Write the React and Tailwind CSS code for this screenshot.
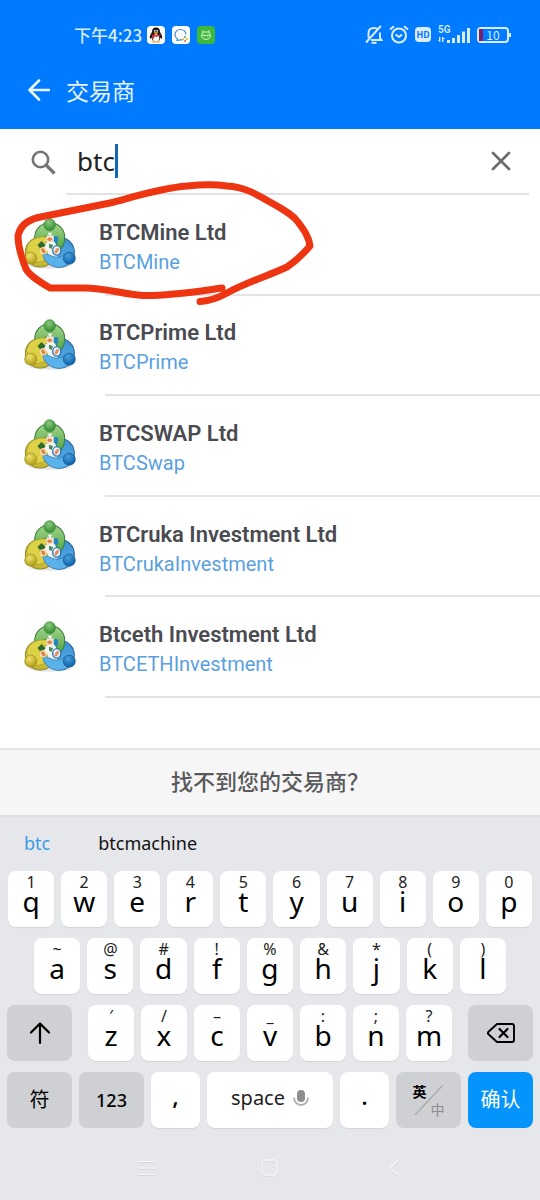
import React from "react";

const brokers = [
  { name: "BTCMine Ltd", server: "BTCMine" },
  { name: "BTCPrime Ltd", server: "BTCPrime" },
  { name: "BTCSWAP Ltd", server: "BTCSwap" },
  { name: "BTCruka Investment Ltd", server: "BTCrukaInvestment" },
  { name: "Btceth Investment Ltd", server: "BTCETHInvestment" },
];

const rowOne = [["q", "1"], ["w", "2"], ["e", "3"], ["r", "4"], ["t", "5"], ["y", "6"], ["u", "7"], ["i", "8"], ["o", "9"], ["p", "0"]];
const rowTwo = [["a", "~"], ["s", "@"], ["d", "#"], ["f", "!"], ["g", "%"], ["h", "&"], ["j", "*"], ["k", "("], ["l", ")"]];
const rowThree = [["z", "′"], ["x", "/"], ["c", "–"], ["v", "_"], ["b", ":"], ["n", ";"], ["m", "?"]];

function LogoDefs() {
  return (
    <svg width="0" height="0" className="absolute" aria-hidden="true">
      <defs>
        <linearGradient id="green" x1="0" y1="0" x2="0" y2="1">
          <stop offset="0" stopColor="#a5d48c" />
          <stop offset="1" stopColor="#4ea544" />
        </linearGradient>
        <linearGradient id="yellow" x1="0" y1="0" x2="0" y2="1">
          <stop offset="0" stopColor="#f0e65c" />
          <stop offset="1" stopColor="#c2b32c" />
        </linearGradient>
        <linearGradient id="blue" x1="0" y1="0" x2="0" y2="1">
          <stop offset="0" stopColor="#3b8ed0" />
          <stop offset="1" stopColor="#5cb6ea" />
        </linearGradient>
        <radialGradient id="greenHead" cx="0.45" cy="0.3" r="0.7">
          <stop offset="0" stopColor="#8cc97c" />
          <stop offset="1" stopColor="#2f8a31" />
        </radialGradient>
        <radialGradient id="yellowHead" cx="0.4" cy="0.3" r="0.7">
          <stop offset="0" stopColor="#efe36a" />
          <stop offset="1" stopColor="#b09a18" />
        </radialGradient>
        <radialGradient id="blueHead" cx="0.4" cy="0.3" r="0.7">
          <stop offset="0" stopColor="#4a9fdc" />
          <stop offset="1" stopColor="#0c5fa8" />
        </radialGradient>
      </defs>
    </svg>
  );
}

function BrokerLogo() {
  return (
    <svg viewBox="0 0 154 154" className="size-[52px] shrink-0" aria-hidden="true">
      <ellipse cx="77" cy="141" rx="62" ry="9" fill="#000" opacity="0.1" />
      <circle cx="48" cy="101" r="44" fill="url(#yellow)" stroke="#8f8726" strokeWidth="3" />
      <circle cx="105" cy="101" r="44" fill="url(#blue)" stroke="#235f96" strokeWidth="3" />
      <path d="M32 62C30 34 50 14 76 14C104 14 124 36 120 64C119 78 114 88 104 96C98 90 96 82 97 72C98 62 94 56 86 54H66C54 58 46 62 32 62Z" fill="url(#green)" stroke="#3c7d39" strokeWidth="3" />
      <path d="M68 52H88L92 74L104 92L98 116H62L50 96L58 76Z" fill="#f3f5f0" />
      <path d="M8 96C8 70 32 54 64 56L76 62L66 74C54 74 47 82 48 92C58 88 66 92 70 104L58 128L28 134Z" fill="#ddd146" stroke="#a1962b" strokeWidth="2" />
      <path d="M40 80L52 68L64 80L56 90L46 88Z" fill="#2e6a2b" />
      <path d="M56 108C66 102 76 112 90 115C102 118 112 114 118 108L140 128C124 150 90 152 70 134C62 126 57 118 56 108Z" fill="#5ab2ea" stroke="#2a6da5" strokeWidth="2" />
      <path d="M70 44H84L77 54Z" fill="#fff" />
      <rect x="66" y="54" width="20" height="17" rx="4" fill="#f6dfc4" />
      <ellipse cx="76" cy="63" rx="7" ry="5" fill="#e0814c" />
      <rect x="88" y="54" width="13" height="18" rx="3" fill="#2586be" />
      <ellipse cx="57" cy="97" rx="10" ry="11" fill="#f6dcae" />
      <ellipse cx="57" cy="97" rx="5" ry="8" fill="#dd8246" transform="rotate(-35 57 97)" />
      <ellipse cx="97" cy="96" rx="12" ry="14" fill="#eef2f4" stroke="#2b74b4" strokeWidth="4" />
      <ellipse cx="97" cy="97" rx="5" ry="9" fill="#e0905c" transform="rotate(30 97 97)" />
      <path d="M74 76L86 80L82 92L74 88Z" fill="#4a8a64" />
      <ellipse cx="76" cy="20" rx="17" ry="18" fill="url(#greenHead)" stroke="#3c8a3a" strokeWidth="2" />
      <circle cx="20" cy="119" r="18" fill="url(#yellowHead)" stroke="#a0911f" strokeWidth="2" />
      <circle cx="134" cy="119" r="18" fill="url(#blueHead)" stroke="#17598f" strokeWidth="2" />
    </svg>
  );
}

function StatusBar() {
  return (
    <div className="flex h-[52px] items-end pb-2 pl-[74px] pr-[29px]">
      <div className="flex items-center gap-[7px]">
        <span className="-mr-[2px] text-[17px] leading-[18px] font-medium text-[#d8ecff]">下午4:23</span>
        <svg viewBox="0 0 18 18" className="size-[18px]" aria-hidden="true">
          <rect width="18" height="18" rx="4" fill="#fff" />
          <path d="M9 1.600c-3 0-4 2-4 4.500C3.500 8.500 2.300 10.500 3 12.600c.4.6 1.100-.4 1.600-1 .3 2.500 2 4.400 4.400 4.400s4.100-1.900 4.400-4.400c.5.6 1.200 1.600 1.600 1 .7-2.100-.5-4.100-2-6.500C13 3.600 12 1.600 9 1.600z" fill="#151515" />
          <ellipse cx="9" cy="12" rx="3.300" ry="3.700" fill="#fff" />
          <path d="M4.600 8.200c3 1.500 5.800 1.500 8.800 0l.2 1.400c-2 1-4.500 1.500-6.600 1.100l-.3 2.300-1.500-.2.100-2.700z" fill="#e02a2a" />
          <ellipse cx="9" cy="6.900" rx="2.400" ry=".8" fill="#f5a623" />
          <circle cx="7.800" cy="4.800" r=".9" fill="#fff" />
          <circle cx="10.200" cy="4.800" r=".9" fill="#fff" />
          <path d="M5 16h3.500M9.500 16H13" stroke="#f0a020" strokeWidth="1.200" />
        </svg>
        <svg viewBox="0 0 18 18" className="size-[18px]" aria-hidden="true">
          <rect width="18" height="18" rx="4" fill="#fff" />
          <path d="M12 13.200c-1 .5-2.300.7-3.600.6L5 14.500l.4-1.700C3.700 11.800 3 10.200 3 8.500 3 5.600 5.500 3.500 8.500 3.500S14 5.600 14 8.500" fill="none" stroke="#3e8fd4" strokeWidth="1.200" />
          <circle cx="13" cy="11" r="1.100" fill="#3cb371" />
          <circle cx="15" cy="13" r="1" fill="#f4a62a" />
          <circle cx="13" cy="15" r="1" fill="#e8684a" />
          <circle cx="11.200" cy="13" r=".9" fill="#f4c430" />
        </svg>
        <svg viewBox="0 0 18 18" className="size-[18px]" aria-hidden="true">
          <rect width="18" height="18" rx="4" fill="#3db83d" />
          <g fill="none" stroke="#d4f3d0" strokeWidth="1">
            <path d="M5.500 4l1 2M12.500 4l-1 2M6 6h6l1.500 3.500c0 2.500-2 4-4.500 4s-4.500-1.500-4.500-4z" />
            <path d="M5 9.300h8M7 11h.8M10.200 11h.8" />
          </g>
        </svg>
      </div>
      <div className="ml-auto flex items-center gap-[6px] text-[#d8ecff]">
        <svg viewBox="0 0 18 19" className="h-[19px] w-[18px]" fill="none" stroke="currentColor" strokeWidth="2" aria-hidden="true">
          <path d="M3.500 13V8C3.500 4.800 5.800 3 9 3c1.700 0 3 .4 4 1.500M15 7.500V13l1.500 2H6" />
          <path d="M15.800 1L1 17.500" />
          <path d="M6.500 17.800h5" />
        </svg>
        <svg viewBox="0 0 20 19" className="h-[19px] w-[20px]" fill="none" stroke="currentColor" strokeWidth="2.100" aria-hidden="true">
          <circle cx="10" cy="10.500" r="7" />
          <path d="M1 4.500L5 1.200M19 4.500L15 1.200M6.500 9.500l3.500 2.500 3-2.500" />
        </svg>
        <span className="grid h-[15px] w-4 place-items-center rounded-[4px] bg-[#d8ecff] text-[9px] leading-none font-bold text-[#0a74f0]">HD</span>
        <svg viewBox="0 0 34 19" className="h-[19px] w-[34px] overflow-visible" fill="currentColor" aria-hidden="true">
          <text x="1" y="8" fontFamily="Roboto" fontSize="10" fontWeight="600">5G</text>
          <path d="M2 12h1.400v5H2zM.5 15.500h2.700V17zM5 12h1.400v5H5zM6 12l2 2H6z" />
          <path d="M10 15h3v3h-3zM15 13h3v5h-3zM20 10h3v8h-3zM25 6.500h3V18h-3zM30 3h3v15h-3z" />
        </svg>
        <div className="flex items-center">
          <div className="relative grid h-4 w-8 place-items-center rounded-[4px] border-2 border-current text-[12px] leading-none">
            <span className="absolute inset-y-0 left-0 w-1 bg-[#7a1f6a]" />
            10
          </div>
          <span className="h-1 w-[2px] bg-current" />
        </div>
      </div>
    </div>
  );
}

function LetterKey({ letter, hint }) {
  return (
    <button type="button" className="flex h-14 min-w-0 flex-1 flex-col items-center rounded-lg bg-white pt-[3px] text-black shadow-[0_1px_1px_rgba(0,0,0,0.08)]">
      <span className="h-4 text-[16px] leading-[16px] text-[#222]">{hint}</span>
      <span className="text-[28px] leading-[22px]">{letter}</span>
    </button>
  );
}

function Keys({ keys }) {
  return keys.map(([letter, hint]) => <LetterKey key={letter} letter={letter} hint={hint} />);
}

const greyKey = "grid h-14 w-[65px] shrink-0 place-items-center rounded-lg bg-[#cfd0d4] text-black";
const whiteKey = "flex h-14 w-[49px] shrink-0 items-center justify-center rounded-lg bg-white text-black shadow-[0_1px_1px_rgba(0,0,0,0.08)]";

function Keyboard() {
  return (
    <section aria-label="键盘" className="bg-[#e6e7eb] font-['Noto_Sans','Noto_Sans_CJK_SC',sans-serif]">
      <div className="flex h-[54px] items-center gap-12 px-6 pb-[2px] text-[18px]">
        <button type="button" className="text-[#3a9be6]">btc</button>
        <button type="button" className="text-[#111]">btcmachine</button>
      </div>
      <div className="flex flex-col gap-[11px]">
        <div className="flex gap-[7px] px-2"><Keys keys={rowOne} /></div>
        <div className="flex gap-[7px] px-[34px]"><Keys keys={rowTwo} /></div>
        <div className="flex gap-4 px-[7px]">
          <button type="button" aria-label="Shift" className={greyKey}>
            <svg viewBox="0 0 22 24" className="h-6 w-[22px]" fill="none" stroke="currentColor" strokeWidth="2.200" strokeLinecap="round" strokeLinejoin="round" aria-hidden="true">
              <path d="M11 22V3M2 11.500L11 2.500l9 9" />
            </svg>
          </button>
          <div className="flex flex-1 gap-[7px]"><Keys keys={rowThree} /></div>
          <button type="button" aria-label="删除" className={greyKey}>
            <svg viewBox="0 0 28 20" className="h-5 w-7" fill="none" stroke="currentColor" strokeWidth="1.900" strokeLinecap="round" strokeLinejoin="round" aria-hidden="true">
              <path d="M10 1h15a2 2 0 0 1 2 2v14a2 2 0 0 1-2 2H10L1.500 11.300a2 2 0 0 1 0-2.600z" />
              <path d="M12.500 6l8 8M20.500 6l-8 8" strokeWidth="2.200" />
            </svg>
          </button>
        </div>
        <div className="flex gap-[7px] px-[7px]">
          <button type="button" className={`${greyKey} text-[20px]`}>符</button>
          <button type="button" className={`${greyKey} text-[18px] font-medium`}>123</button>
          <button type="button" className={`${whiteKey} pb-2 text-[24px] font-medium`}>,</button>
          <button type="button" className="flex h-14 flex-1 items-center justify-center gap-2 rounded-lg bg-white pb-1 text-[20px] text-[#222] shadow-[0_1px_1px_rgba(0,0,0,0.08)]">
            space
            <svg viewBox="0 0 16 18" className="h-[18px] w-4" aria-hidden="true">
              <rect x="4" y="1" width="8" height="12" rx="4" fill="#8e8e90" />
              <path d="M1 8.500c0 4.500 3 7.500 7 7.500s7-3 7-7.500" fill="none" stroke="#b0b0b2" strokeWidth="1.800" />
            </svg>
          </button>
          <button type="button" className={`${whiteKey} pb-2 text-[24px] font-medium`}>.</button>
          <button type="button" aria-label="英/中" className="flex h-14 w-[65px] shrink-0 items-center justify-center rounded-lg bg-[#cfd0d4]">
            <span className="-mr-2 self-start pt-3 text-[14px] leading-[16px] font-bold text-black">英</span>
            <svg viewBox="0 0 28 30" className="-mx-1 h-[30px] w-7" aria-hidden="true"><path d="M0 30L28 0" stroke="#a9aaad" strokeWidth="1.300" /></svg>
            <span className="-ml-2 self-end pb-[10px] text-[14px] leading-[16px] text-[#8c8d90]">中</span>
          </button>
          <button type="button" className="grid h-14 w-[65px] shrink-0 place-items-center rounded-lg bg-[#0494fb] text-[20px] text-white">确认</button>
        </div>
      </div>
      <nav aria-label="系统导航" className="flex h-[72px] items-center justify-center gap-[110px] pt-2 text-[#f8f9fb]">
        <button type="button" aria-label="菜单">
          <svg viewBox="0 0 16 16" className="size-4" fill="none" aria-hidden="true">
            <path d="M0 2.500h16M0 9h16M0 15.500h16" stroke="#d5d6da" />
            <path d="M0 1.500h16M0 8h16M0 14.500h16" stroke="currentColor" />
          </svg>
        </button>
        <button type="button" aria-label="主页">
          <svg viewBox="0 0 18 18" className="mx-[-3px] size-[18px]" fill="none" aria-hidden="true">
            <rect x="1" y="1.500" width="15" height="15" rx="3" stroke="#d5d6da" strokeWidth="2" />
            <rect x="1" y="1" width="15" height="15" rx="3" stroke="currentColor" strokeWidth="1.300" />
          </svg>
        </button>
        <button type="button" aria-label="返回">
          <svg viewBox="0 0 16 18" className="h-[18px] w-4" fill="none" aria-hidden="true">
            <path d="M12 2.500L4 9.500l8 7" stroke="#d5d6da" strokeWidth="2" />
            <path d="M12 1.500L4 9l8 7" stroke="currentColor" strokeWidth="1.300" />
          </svg>
        </button>
      </nav>
    </section>
  );
}

export default function App() {
  return (
    <div className="flex min-h-screen flex-col bg-white font-[Roboto,'Noto_Sans_CJK_SC',sans-serif]">
      <LogoDefs />
      <header className="bg-[#007aff] font-['Noto_Sans_CJK_SC',sans-serif]">
        <StatusBar />
        <div className="flex h-[77px] items-center gap-4 pb-[2px] pl-7 text-[#e8f5ff]">
          <button type="button" aria-label="返回">
            <svg viewBox="0 0 22 22" className="size-[22px]" fill="none" stroke="currentColor" strokeWidth="2.600" strokeLinecap="round" strokeLinejoin="round" aria-hidden="true">
              <path d="M21 11H2M11 1.500L1.500 11l9.500 9.500" />
            </svg>
          </button>
          <h1 className="text-[23px] leading-[28px]">交易商</h1>
        </div>
      </header>
      <main className="relative flex flex-1 flex-col">
        <div className="flex h-[66px] pl-[31px] pr-[11px]">
          <label htmlFor="search" aria-label="搜索" className="flex w-[35px] items-center">
            <svg viewBox="0 0 25 25" className="size-[25px]" fill="none" stroke="#757575" aria-hidden="true">
              <circle cx="9.500" cy="9.500" r="7.700" strokeWidth="2.600" />
              <path d="M15 15l8.500 8.500" strokeWidth="3.200" />
            </svg>
          </label>
          <div className="flex flex-1 items-center border-b-2 border-[#dfe3e5] pl-[11px] pr-[18px]">
            <input id="search" type="text" defaultValue="btc" className="[field-sizing:content] h-10 min-w-0 font-['Noto_Sans',sans-serif] text-[26px] text-[#222] caret-transparent outline-none" />
            <span className="h-[34px] w-[3px] bg-[#1467b8]" />
            <button type="button" aria-label="清除" className="ml-auto">
              <svg viewBox="0 0 20 20" className="size-5" fill="none" stroke="#6b6b6b" strokeWidth="2.600" strokeLinecap="round" aria-hidden="true">
                <path d="M2 2l16 16M18 2L2 18" />
              </svg>
            </button>
          </div>
        </div>
        <ul className="grid flex-1 auto-rows-fr pb-[50px]">
          {brokers.map((broker) => (
            <li key={broker.server} className="flex flex-col">
              <a href="#broker" className="flex flex-1 items-center gap-[23px] pl-6">
                <BrokerLogo />
                <span className="flex flex-col pt-[5px]">
                  <span className="text-[22px] leading-[30px] font-semibold text-[#4a4b50]">{broker.name}</span>
                  <span className="text-[20px] leading-[28px] text-[#5a9fe0]">{broker.server}</span>
                </span>
              </a>
              <span className="ml-[105px] h-[2px] bg-[#e4e4e6]" />
            </li>
          ))}
        </ul>
        <svg viewBox="0 0 330 130" className="pointer-events-none absolute top-[50px] left-0 h-[130px] w-[330px]" fill="none" stroke="#ee3512" strokeWidth="7" strokeLinecap="round" strokeLinejoin="round" aria-hidden="true">
          <path d="M222 109C200 112 170 117 143 116.500C122 115 105 109 85 109L50 109C40 103 30 97 26 90C22 80 18 68 18 57C20 47 28 41 38 38.500C60 34 85 29 110 24C130 19 160 9 187 7C200 5.500 215 5 227 7C245 8 258 16 270 23C282 30 292 35 298 43C304 51 309 58 310 67C304 74 296 82 287 88C270 96 245 104 227 114C218 119 211 122 200 122.500" />
        </svg>
      </main>
      <button type="button" className="flex h-[69px] w-full items-center justify-center border-y-2 border-t-[#e4e4e4] border-b-[#e0e1e3] bg-[#f6f6f6] text-[22px] font-medium text-[#58595b]">
        找不到您的交易商？
      </button>
      <Keyboard />
    </div>
  );
}
